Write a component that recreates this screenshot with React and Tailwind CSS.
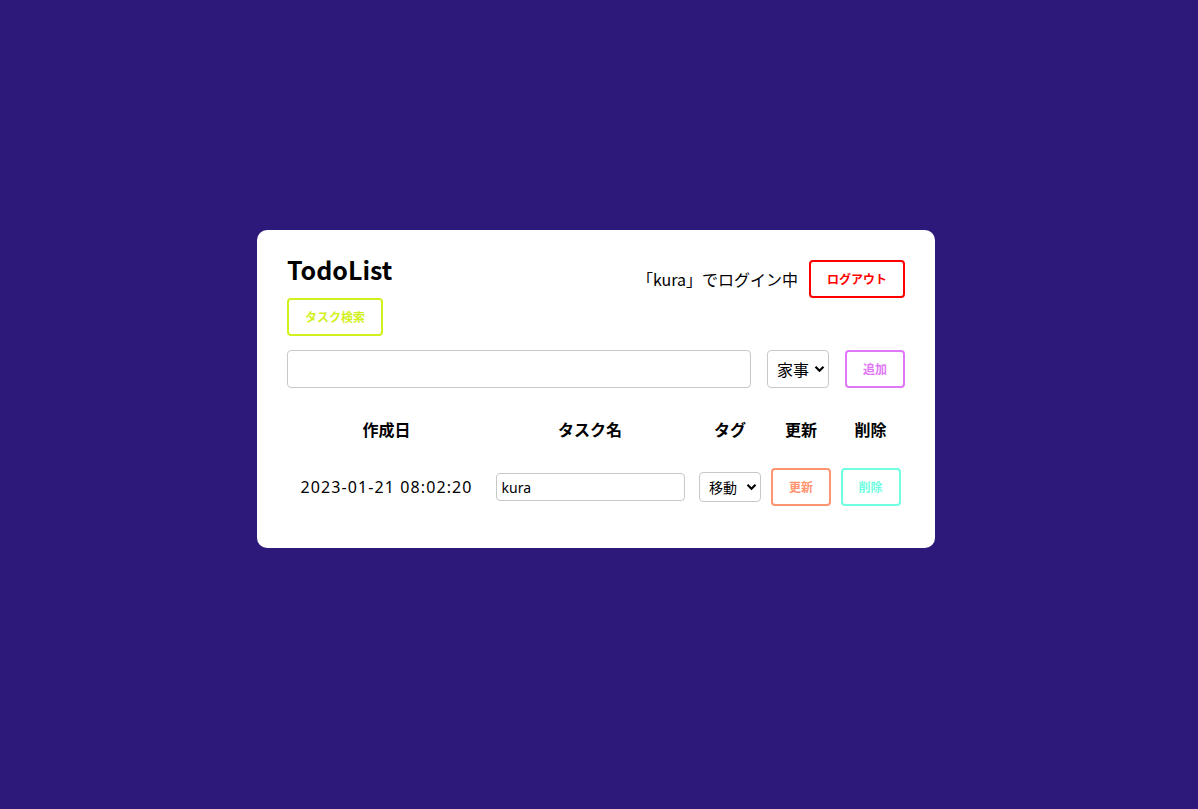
import React from "react";

const font = { fontFamily: '"Noto Sans CJK JP", "Noto Sans", sans-serif' };
const latin = { fontFamily: '"Noto Sans", "Noto Sans CJK JP", sans-serif' };

const Chevron = () => (
    <svg
        className="absolute right-[4px] top-1/2 -translate-y-1/2 pointer-events-none"
        width="11"
        height="8"
        viewBox="0 0 11 8"
    >
        <path d="M1.5 1.8 L5.5 5.8 L9.5 1.8" fill="none" stroke="#000" strokeWidth="2.2" />
    </svg>
);

const TagSelect = ({ value, className, textSize }) => (
    <div className={`relative ${className}`}>
        <select
            defaultValue={value}
            className={`appearance-none w-full h-full border border-[#c8c8c8] rounded-[4px] ${textSize} pl-[9px] bg-white outline-none`}
        >
            <option>家事</option>
            <option>移動</option>
        </select>
        <Chevron />
    </div>
);

const App = () => {
    return (
        <div
            className="w-full min-h-[809px] bg-[#2c1979] flex justify-center items-start pt-[230px] pr-[6px] text-black"
            style={font}
        >
            <div className="w-[678px] bg-white rounded-[10px] px-[30px] pt-[25px] pb-[24px]">

                {/* Header */}
                <div className="flex justify-between items-start">
                    <div className="flex flex-col items-start">
                        <h1 className="text-[25px] leading-[28px] font-bold">TodoList</h1>
                        <button className="mt-[15px] w-[96px] h-[38px] border-2 border-[#d2f01e] rounded-[4px] text-[#d2f01e] text-[12px] font-bold">
                            タスク検索
                        </button>
                    </div>
                    <div className="flex items-center mt-[5px]">
                        <span className="text-[16px]">「kura」でログイン中</span>
                        <button className="ml-[11px] w-[96px] h-[38px] border-2 border-[#ff0000] rounded-[4px] text-[#ff0000] text-[12px] font-bold">
                            ログアウト
                        </button>
                    </div>
                </div>

                {/* Add form */}
                <div className="flex items-center mt-[14px]">
                    <input
                        type="text"
                        className="w-[464px] h-[38px] border border-[#c8c8c8] rounded-[4px] px-2 outline-none"
                    />
                    <TagSelect value="家事" className="ml-[16px] w-[62px] h-[38px]" textSize="text-[16px]" />
                    <button className="ml-[16px] w-[60px] h-[38px] border-2 border-[#e077f7] rounded-[4px] text-[#e077f7] text-[12px] font-bold">
                        追加
                    </button>
                </div>

                {/* List */}
                <div className="mt-[20px] grid grid-cols-[199px_208px_72px_70px_69px] text-center">
                    <div className="h-[42px] flex items-center justify-center font-bold text-[16px]">作成日</div>
                    <div className="h-[42px] flex items-center justify-center font-bold text-[16px]">タスク名</div>
                    <div className="h-[42px] flex items-center justify-center font-bold text-[16px]">タグ</div>
                    <div className="h-[42px] flex items-center justify-center font-bold text-[16px]">更新</div>
                    <div className="h-[42px] flex items-center justify-center font-bold text-[16px]">削除</div>

                    <div className="h-[74px] flex items-center justify-center text-[16px] tracking-[1.1px]" style={latin}>
                        2023-01-21 08:02:20
                    </div>
                    <div className="h-[74px] flex items-center justify-center">
                        <input
                            type="text"
                            defaultValue="kura"
                            className="w-[189px] h-[28px] border border-[#c8c8c8] rounded-[4px] px-[5px] text-[14px] outline-none"
                            style={latin}
                        />
                    </div>
                    <div className="h-[74px] flex items-center justify-center">
                        <TagSelect value="移動" className="w-[62px] h-[30px]" textSize="text-[14px]" />
                    </div>
                    <div className="h-[74px] flex items-center justify-center">
                        <button className="w-[60px] h-[38px] border-2 border-[#ff9470] rounded-[4px] text-[#ff9470] text-[12px] font-bold">
                            更新
                        </button>
                    </div>
                    <div className="h-[74px] flex items-center justify-center">
                        <button className="w-[60px] h-[38px] border-2 border-[#70ffe0] rounded-[4px] text-[#70ffe0] text-[12px] font-bold">
                            削除
                        </button>
                    </div>
                </div>
            </div>
        </div>
    );
};

export default App;
